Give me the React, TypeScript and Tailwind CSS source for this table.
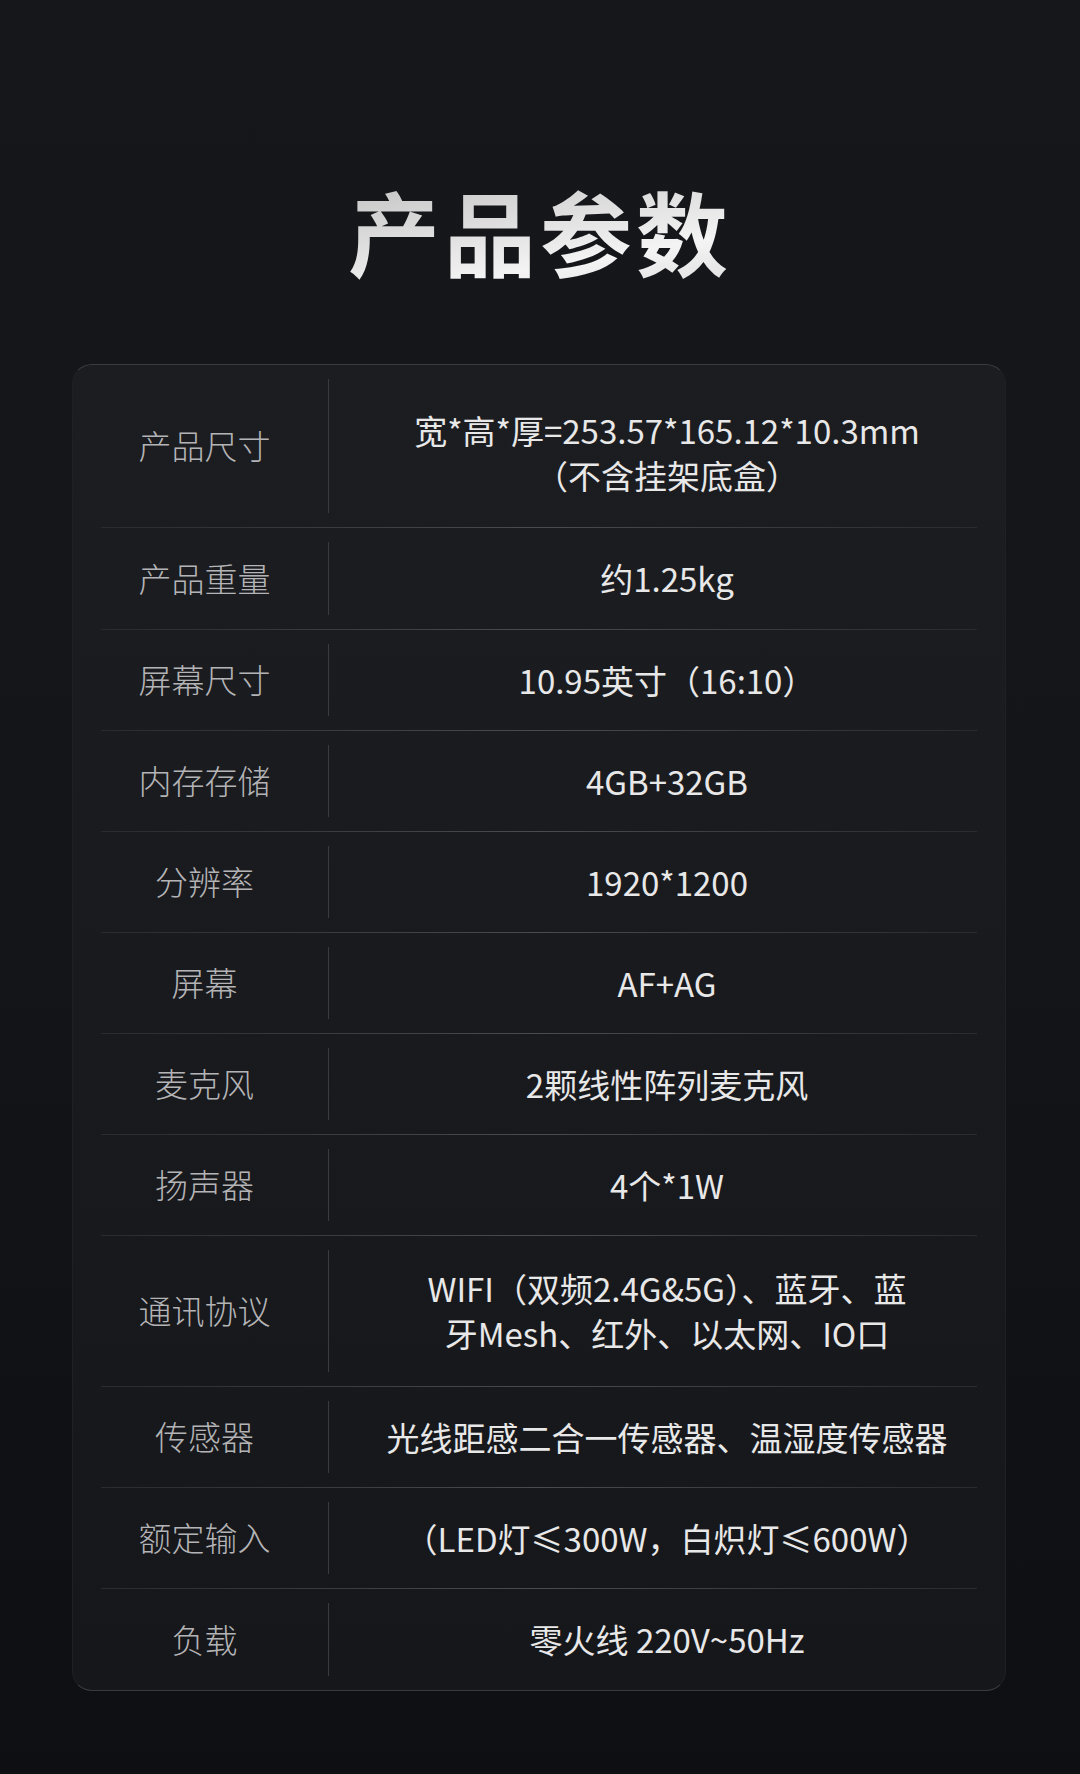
import type React from "react"

// 参数行
interface SpecRow {
  label: string
  lines: string[]
  height: string
  offset?: string
}

const specs: SpecRow[] = [
  { label: "产品尺寸", lines: ["宽*高*厚=253.57*165.12*10.3mm", "（不含挂架底盒）"], height: "h-[162px]", offset: "pt-[14px]" },
  { label: "产品重量", lines: ["约1.25kg"], height: "h-[101px]" },
  { label: "屏幕尺寸", lines: ["10.95英寸（16:10）"], height: "h-[100px]" },
  { label: "内存存储", lines: ["4GB+32GB"], height: "h-[100px]" },
  { label: "分辨率", lines: ["1920*1200"], height: "h-[100px]" },
  { label: "屏幕", lines: ["AF+AG"], height: "h-[100px]" },
  { label: "麦克风", lines: ["2颗线性阵列麦克风"], height: "h-[100px]" },
  { label: "扬声器", lines: ["4个*1W"], height: "h-[100px]" },
  { label: "通讯协议", lines: ["WIFI（双频2.4G&5G）、蓝牙、蓝", "牙Mesh、红外、以太网、IO口"], height: "h-[150px]" },
  { label: "传感器", lines: ["光线距感二合一传感器、温湿度传感器"], height: "h-[100px]" },
  { label: "额定输入", lines: ["（LED灯≤300W，白炽灯≤600W）"], height: "h-[100px]" },
  { label: "负载", lines: ["零火线 220V~50Hz"], height: "h-[101px]" },
]

const App: React.FC = () => {
  return (
    <div
      className="min-h-[1774px] w-[1080px] bg-gradient-to-b from-[#16171b] via-[#141519] to-[#0e0f12] pt-[175px] pb-[87px]"
      style={{ fontFamily: '"Noto Sans CJK SC", "Noto Sans", sans-serif' }}
    >
      {/* 标题 */}
      <h1 className="h-[189px] text-center text-[92px] leading-[110px] font-bold tracking-[4px] bg-gradient-to-br from-[#a9a9a9] via-[#f4f4f4] to-[#a4a4a4] bg-clip-text text-transparent">
        产品参数
      </h1>

      {/* 参数表 */}
      <div className="mx-[72px] w-[934px] rounded-[20px] bg-gradient-to-b from-[#1c1d21] to-[#16171b] border border-[#1f2024] border-t-[#3a3b40] border-b-[#3a3b40] overflow-hidden">
        {specs.map((row, i) => (
          <div key={row.label}>
            {i > 0 && (
              <div className="mx-[28px] h-px bg-gradient-to-r from-[#2a2b30] via-[#4a4b50] to-[#2a2b30]" />
            )}
            <div className={`flex items-center ${row.height}`}>
              <div className="w-[255px] pl-[8px] text-center text-[33px] font-light text-[#b4b4b6]">
                {row.label}
              </div>
              <div className="self-stretch w-px my-[14px] bg-[#3a3b40]" />
              <div className={`flex-1 text-center text-[33px] leading-[45px] text-[#e8e8e8] ${row.offset ?? ""}`}>
                {row.lines.map((line) => (
                  <div key={line}>{line}</div>
                ))}
              </div>
            </div>
          </div>
        ))}
      </div>
    </div>
  )
}

export default App
